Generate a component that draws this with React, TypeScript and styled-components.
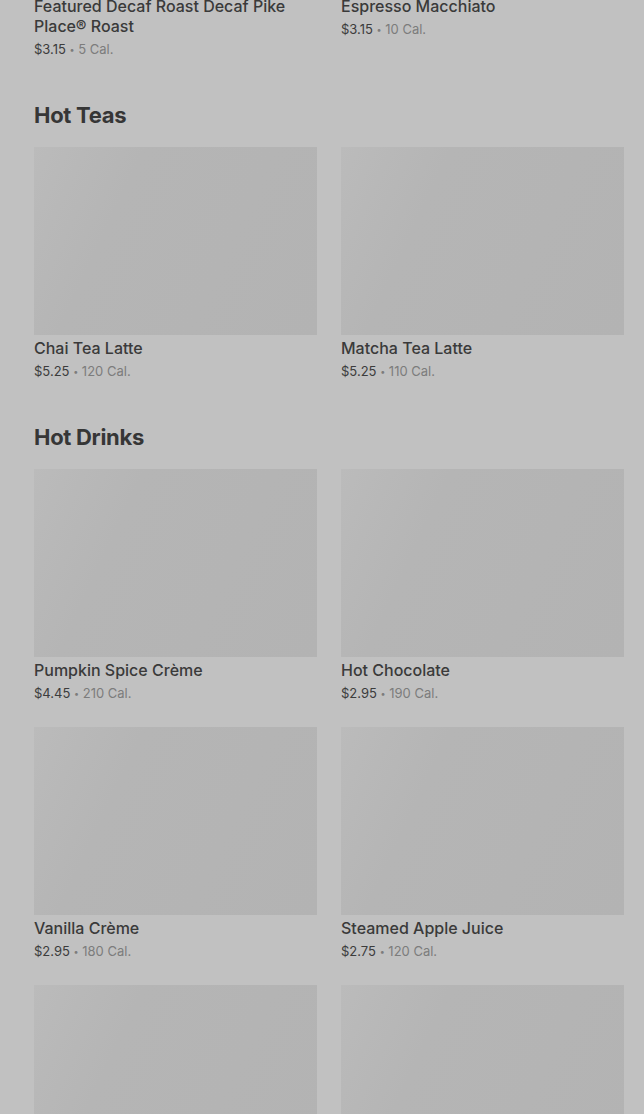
import styled, { createGlobalStyle } from 'styled-components'

type Item = {
  name: string
  price: string
  cal: string
}

type Section = {
  title: string
  items: Item[]
}

const menu: Section[] = [
  {
    title: 'Hot Coffees',
    items: [
      { name: 'Featured Decaf Roast Decaf Pike Place® Roast', price: '$3.15', cal: '5 Cal.' },
      { name: 'Espresso Macchiato', price: '$3.15', cal: '10 Cal.' },
    ],
  },
  {
    title: 'Hot Teas',
    items: [
      { name: 'Chai Tea Latte', price: '$5.25', cal: '120 Cal.' },
      { name: 'Matcha Tea Latte', price: '$5.25', cal: '110 Cal.' },
    ],
  },
  {
    title: 'Hot Drinks',
    items: [
      { name: 'Pumpkin Spice Crème', price: '$4.45', cal: '210 Cal.' },
      { name: 'Hot Chocolate', price: '$2.95', cal: '190 Cal.' },
      { name: 'Vanilla Crème', price: '$2.95', cal: '180 Cal.' },
      { name: 'Steamed Apple Juice', price: '$2.75', cal: '120 Cal.' },
      { name: 'Caramel Apple Spice', price: '$4.45', cal: '380 Cal.' },
      { name: 'Steamed Milk', price: '$2.75', cal: '190 Cal.' },
    ],
  },
]

const GlobalStyle = createGlobalStyle`
  html, body {
    margin: 0;
    padding: 0;
    overflow: hidden;
    background: #c1c1c1;
  }
  body {
    font-family: Inter, "Noto Sans", "Liberation Sans", sans-serif;
    color: #383838;
  }
`

const Page = styled.main`
  padding: 0 20px 0 34px;
  height: 1114px;
  overflow: hidden;
`

// content is scrolled, so the first heading and images sit above the fold
const List = styled.div`
  display: flex;
  flex-direction: column;
  gap: 42px;
  margin-top: -241px;
`

const Heading = styled.h2`
  margin: 0 0 18px;
  font-size: 22px;
  line-height: 28px;
  font-weight: 700;
  letter-spacing: -0.3px;
  color: #363636;
`

const Grid = styled.div`
  display: grid;
  grid-template-columns: 1fr 1fr;
  column-gap: 24px;
  row-gap: 24px;
  align-items: start;
`

const Card = styled.div`
  display: flex;
  flex-direction: column;
`

const Thumb = styled.div`
  height: 188px;
  background: linear-gradient(115deg, #bbbbbb 0%, #b8b8b8 14%, #b5b5b5 30%, #b3b3b3 100%);
`

const Name = styled.div`
  margin-top: 3px;
  font-size: 16px;
  line-height: 20px;
  font-weight: 500;
  color: #3a3a3a;
`

const Meta = styled.div`
  margin-top: 3px;
  height: 20px;
  font-size: 13px;
  line-height: 20px;
  color: #3c3c3c;
`

const Cal = styled.span`
  color: #7c7c7c;
`

const Dot = styled.span`
  font-size: 9px;
  line-height: 0;
  vertical-align: 1px;
`

export default function App() {
  return (
    <>
      <GlobalStyle />
      <Page>
        <List>
          {menu.map((section) => (
            <section key={section.title}>
              <Heading>{section.title}</Heading>
              <Grid>
                {section.items.map((item) => (
                  <Card key={item.name}>
                    <Thumb />
                    <Name>{item.name}</Name>
                    <Meta>
                      {item.price}{' '}
                      <Cal>
                        <Dot>•</Dot> {item.cal}
                      </Cal>
                    </Meta>
                  </Card>
                ))}
              </Grid>
            </section>
          ))}
        </List>
      </Page>
    </>
  )
}
